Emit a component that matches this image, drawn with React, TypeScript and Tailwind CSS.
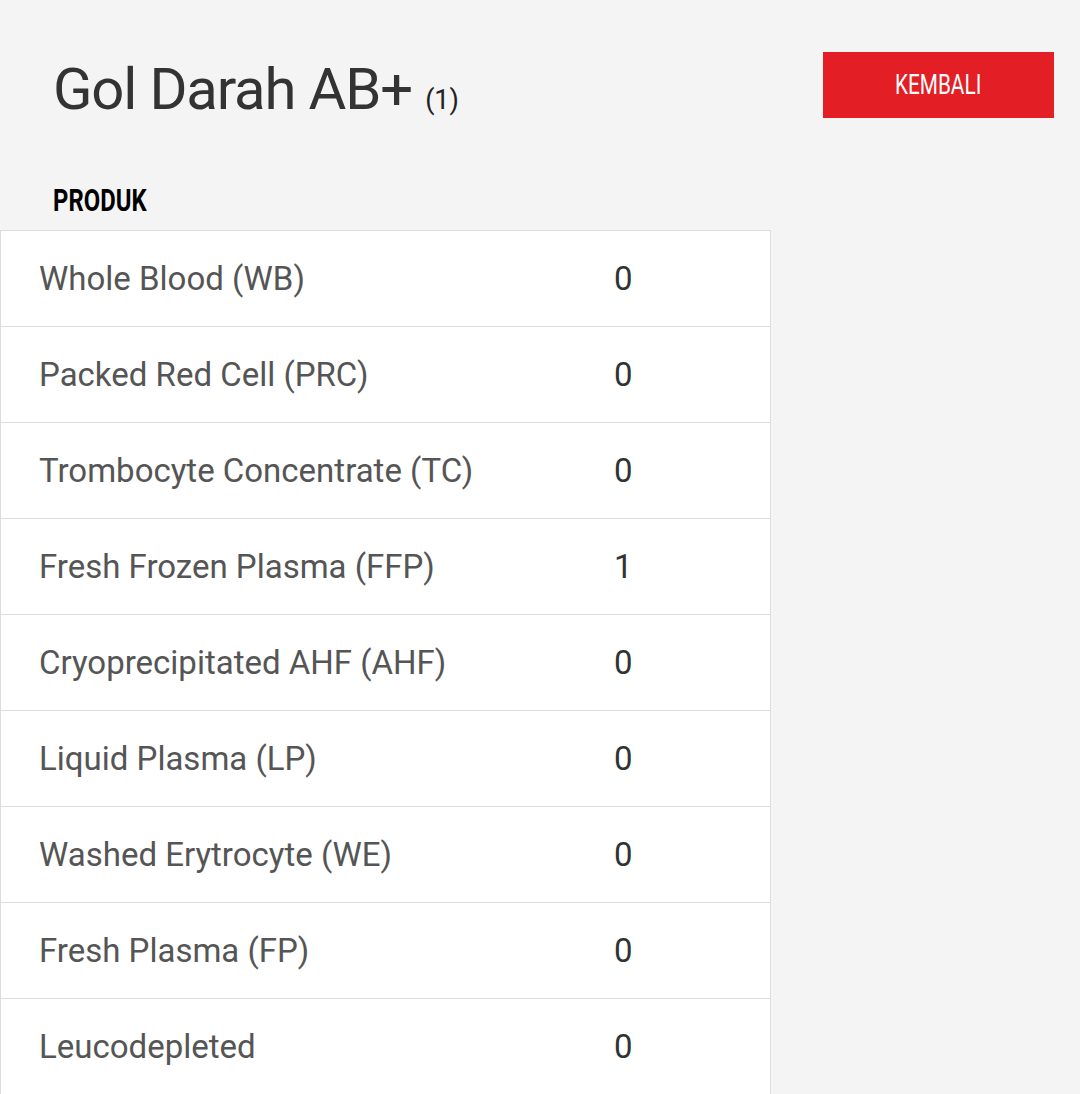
const products = [
  { name: 'Whole Blood (WB)', qty: 0 },
  { name: 'Packed Red Cell (PRC)', qty: 0 },
  { name: 'Trombocyte Concentrate (TC)', qty: 0 },
  { name: 'Fresh Frozen Plasma (FFP)', qty: 1 },
  { name: 'Cryoprecipitated AHF (AHF)', qty: 0 },
  { name: 'Liquid Plasma (LP)', qty: 0 },
  { name: 'Washed Erytrocyte (WE)', qty: 0 },
  { name: 'Fresh Plasma (FP)', qty: 0 },
  { name: 'Leucodepleted', qty: 0 },
];

export default function App() {
  return (
    <div className="min-h-screen bg-[#f4f4f4] font-['Roboto',sans-serif] overflow-hidden h-[1094px]">
      {/* Header */}
      <div className="flex items-start justify-between pl-[53px] pr-[26px] pt-[52px]">
        <h1 className="text-[58px] leading-[66px] text-[#333] tracking-[-0.02em] mt-[4px]">
          Gol Darah AB+ <span className="text-[27px] tracking-normal text-[#222]">(1)</span>
        </h1>
        <button className="w-[231px] h-[66px] bg-[#e31e24] text-white text-[27px] flex items-center justify-center">
          <span className="inline-block scale-x-[0.77]">KEMBALI</span>
        </button>
      </div>

      <div className="pl-[53px] mt-[53px] leading-[30px]">
        <span className="inline-block origin-left scale-x-[0.77] text-[31px] font-bold text-black">PRODUK</span>
      </div>

      {/* Table */}
      <div className="mt-[9px] w-[771px] bg-white border border-[#dddddd]">
        {products.map((p) => (
          <div
            key={p.name}
            className="grid grid-cols-[575px_1fr] h-[96px] items-center border-b border-[#dddddd] last:border-b-0"
          >
            <div className="pl-[38px] text-[33px] text-[#555]">{p.name}</div>
            <div className="pl-[38px] text-[33px] text-[#333]">{p.qty}</div>
          </div>
        ))}
      </div>
    </div>
  );
}
